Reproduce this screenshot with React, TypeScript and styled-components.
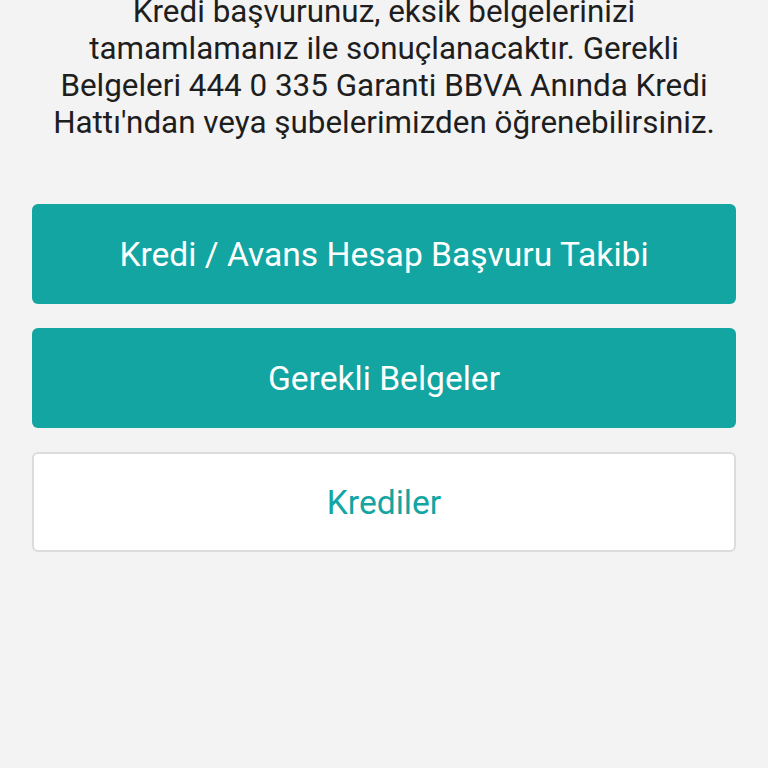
import React from 'react';
import styled, { createGlobalStyle } from 'styled-components';

const GlobalStyle = createGlobalStyle`
  html, body {
    margin: 0;
    padding: 0;
    background: #f3f3f3;
    font-family: Roboto, "Noto Sans", sans-serif;
  }
`;

// sayfa
const Page = styled.div`
  width: 768px;
  height: 768px;
  overflow: hidden;
  background: #f3f3f3;
`;

// bilgi metni (ust kisim ekranin disina tasiyor)
const Info = styled.p`
  margin: -7px 0 0;
  padding: 0 10px;
  text-align: center;
  font-size: 31.4px;
  line-height: 37px;
  color: #1e1e1e;
`;

const ButtonList = styled.div`
  display: flex;
  flex-direction: column;
  gap: 24px;
  padding: 63px 32px 0;
`;

const ActionBtn = styled.button<{ $outline?: boolean }>`
  height: 100px;
  border-radius: 6px;
  font-family: Roboto, "Noto Sans", sans-serif;
  font-size: 33.6px;
  cursor: pointer;
  background: ${(p) => (p.$outline ? '#ffffff' : '#12a5a1')};
  color: ${(p) => (p.$outline ? '#12a5a1' : '#ffffff')};
  border: ${(p) => (p.$outline ? '2px solid #dcdcdc' : 'none')};
`;

const App = () => {
  return (
    <Page>
      <GlobalStyle />
      <Info>
        Kredi başvurunuz, eksik belgelerinizi
        <br />
        tamamlamanız ile sonuçlanacaktır. Gerekli
        <br />
        Belgeleri 444 0 335 Garanti BBVA Anında Kredi
        <br />
        Hattı'ndan veya şubelerimizden öğrenebilirsiniz.
      </Info>
      <ButtonList>
        <ActionBtn>Kredi / Avans Hesap Başvuru Takibi</ActionBtn>
        <ActionBtn>Gerekli Belgeler</ActionBtn>
        <ActionBtn $outline>Krediler</ActionBtn>
      </ButtonList>
    </Page>
  );
};

export default App;
